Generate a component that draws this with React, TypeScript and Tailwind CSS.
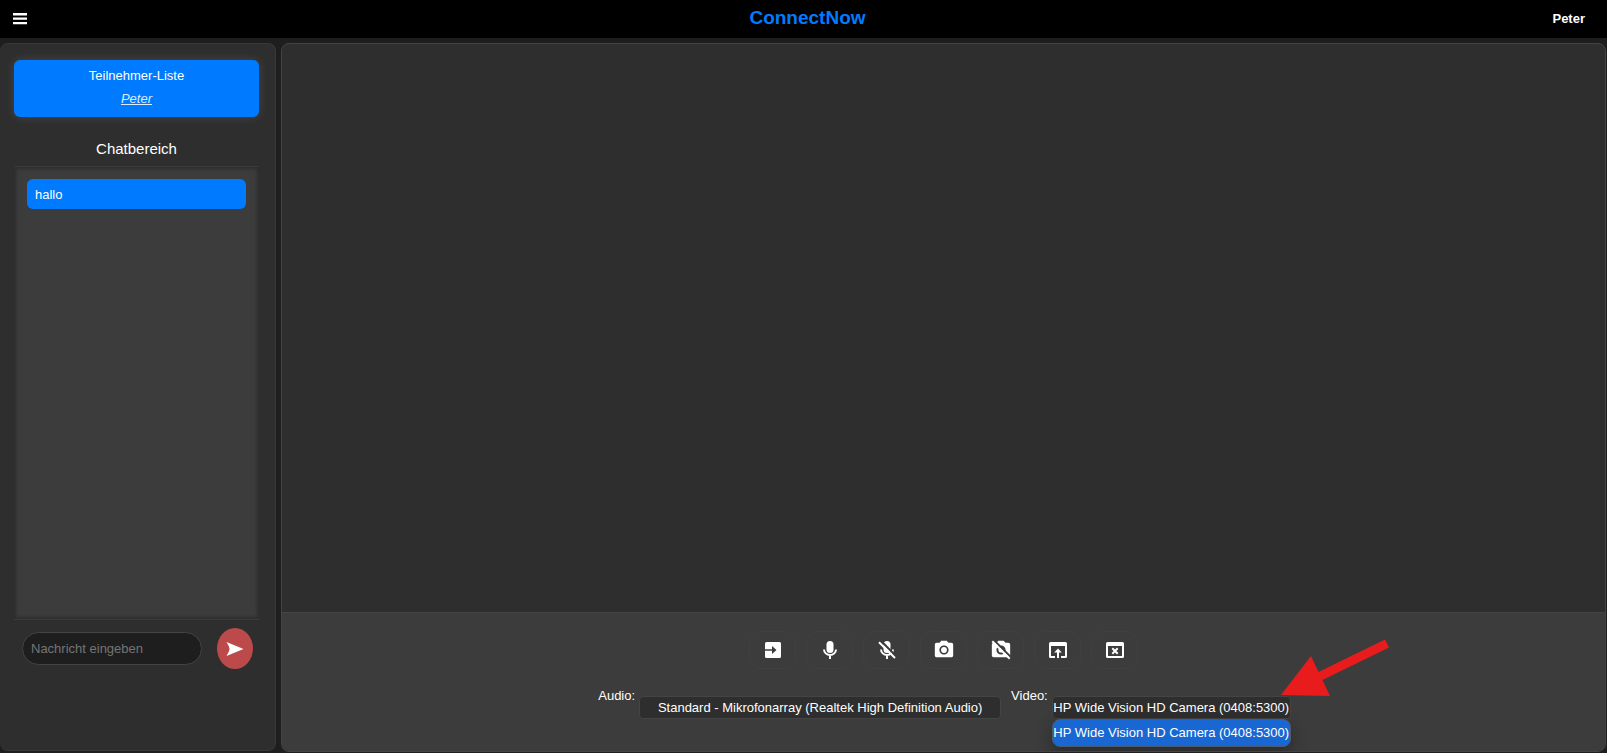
import type { ReactNode } from 'react';
import { MdPhotoCamera } from 'react-icons/md';

const audioDevices = ['Standard - Mikrofonarray (Realtek High Definition Audio)'];
const videoDevices = ['HP Wide Vision HD Camera (0408:5300)'];

function MenuIcon() {
  return (
    <svg viewBox="0 0 14 12" className="h-3 w-[14px]" fill="currentColor" aria-hidden="true">
      <path d="M0 0h14v2.400H0zM0 4.400h14v2.400H0zM0 8.900h14v2.400H0z" />
    </svg>
  );
}

function JoinIcon() {
  return (
    <svg viewBox="0 0 18 18" className="size-[18px]" fill="currentColor" aria-hidden="true">
      <path
        fillRule="evenodd"
        d="M2.500 1h13A1.500 1.500 0 0 1 17 2.500v13a1.500 1.500 0 0 1-1.500 1.500h-13A1.500 1.500 0 0 1 1 15.500V9.800h7v3.200L12.500 9 8 5v3.200H1V2.500A1.500 1.500 0 0 1 2.500 1z"
      />
    </svg>
  );
}

function MicIcon({ off = false }: { off?: boolean }) {
  return (
    <svg viewBox="0 0 18 18" className="size-[18px]" fill="none" aria-hidden="true">
      <rect x="5.500" y="0" width="7" height="12" rx="3.500" fill="currentColor" />
      <path d="M3 8.500a6 5.500 0 0 0 12 0M9 14v4" stroke="currentColor" strokeWidth="1.900" />
      {off && (
        <>
          <path d="M3 0 19 16" stroke="#3c3c3c" strokeWidth="2.200" />
          <path d="M1 1.200 17 17" stroke="currentColor" strokeWidth="1.900" />
        </>
      )}
    </svg>
  );
}

function CameraOffIcon() {
  return (
    <svg viewBox="0 0 24 24" className="size-[22px]" aria-hidden="true">
      <path
        fill="currentColor"
        fillRule="evenodd"
        d="M9 2 7.170 4H4a2 2 0 0 0-2 2v12a2 2 0 0 0 2 2h16a2 2 0 0 0 2-2V6a2 2 0 0 0-2-2h-3.170L15 2zm3 5a5 5 0 1 1 0 10 5 5 0 0 1 0-10zm0 2.200a2.800 2.800 0 1 0 0 5.600 2.800 2.800 0 0 0 0-5.600z"
      />
      <path d="M4.500 1.500 24 21" stroke="#3c3c3c" strokeWidth="2.200" />
      <path d="M2.500 2.500 21.500 21.500" stroke="currentColor" strokeWidth="2.200" />
    </svg>
  );
}

function ShareWindowIcon() {
  return (
    <svg viewBox="0 0 18 18" className="size-[18px]" fill="currentColor" aria-hidden="true">
      <path d="M1.500 1h15A1.500 1.500 0 0 1 18 2.500v13a1.500 1.500 0 0 1-1.500 1.500H12v-2h4V5H2v10h4v2H1.500A1.500 1.500 0 0 1 0 15.500v-13A1.500 1.500 0 0 1 1.500 1z" />
      <path d="M9 7.500 12.800 11.500H10V17H8v-5.500H5.200z" />
    </svg>
  );
}

function CloseWindowIcon() {
  return (
    <svg viewBox="0 0 18 18" className="size-[18px]" fill="currentColor" aria-hidden="true">
      <path
        fillRule="evenodd"
        d="M1.500 1h15A1.500 1.500 0 0 1 18 2.500v13a1.500 1.500 0 0 1-1.500 1.500h-15A1.500 1.500 0 0 1 0 15.500v-13A1.500 1.500 0 0 1 1.500 1zM2 5v10h14V5z"
      />
      <path d="m6.300 7.300 5.400 5.400m0-5.400-5.400 5.400" stroke="currentColor" strokeWidth="2" />
    </svg>
  );
}

function SendIcon() {
  return (
    <svg viewBox="0 0 18 16" className="h-4 w-[18px]" fill="currentColor" aria-hidden="true">
      <path d="M.5 1 17.500 8 .5 15Q3.200 11 3.600 8 3.200 5 .5 1z" />
    </svg>
  );
}

function ControlButton({ label, children }: { label: string; children: ReactNode }) {
  return (
    <button
      type="button"
      aria-label={label}
      className="flex h-[38px] w-[47px] items-center justify-center rounded-xl border border-[#404040] text-white"
    >
      {children}
    </button>
  );
}

function DeviceSelect({ id, devices, className }: { id: string; devices: string[]; className: string }) {
  return (
    <select
      id={id}
      className={`h-[23px] appearance-none rounded border border-[#444] bg-[#2e2e2e] text-center text-[13px] text-white ${className}`}
    >
      {devices.map((device) => (
        <option key={device}>{device}</option>
      ))}
    </select>
  );
}

export default function App() {
  return (
    <div className="flex h-screen flex-col overflow-hidden bg-[#1e1e1e] font-['Liberation_Sans',Arial,sans-serif] text-[13px] text-white">
      <header className="grid h-[38px] shrink-0 grid-cols-3 items-center bg-black px-3">
        <button type="button" aria-label="Menü" className="w-fit px-px">
          <MenuIcon />
        </button>
        <h1 className="pb-[2px] pl-2 text-center text-[19px] leading-5 font-bold text-[#007bff]">ConnectNow</h1>
        <span className="pr-[10px] text-right font-bold">Peter</span>
      </header>

      <div className="flex min-h-0 flex-1 gap-[5px] pt-[5px]">
        <aside className="mb-[2px] flex w-[276px] shrink-0 flex-col rounded-lg border border-l-0 border-[#383838] bg-[#2e2e2e] px-4 pt-4 pl-[14px]">
          <section className="flex h-[57px] shrink-0 flex-col items-center gap-[3px] rounded-md bg-[#007bff] pt-[6px] leading-5 shadow-[0_0_10px_rgba(255,255,255,0.12)]">
            <h2>Teilnehmer-Liste</h2>
            <a href="#peter" className="text-[#dcebff] italic underline">
              Peter
            </a>
          </section>
          <h2 className="mt-5 border-b border-[#3a3a3a] pt-[3px] pb-2 text-center text-[15px] leading-[18px]">
            Chatbereich
          </h2>
          <div className="flex-1 border-b border-[#3c3c3c] bg-[#3c3c3c] px-[13px] py-3 shadow-[inset_0_0_3px_2px_#2e2e2e]">
            <p className="rounded-md bg-[#007bff] px-2 pt-[6px] pb-1 leading-5">hallo</p>
          </div>
          <form className="mb-[81px] flex items-center gap-[15px] pt-2 pr-[6px] pl-2">
            <input
              type="text"
              aria-label="Nachricht eingeben"
              placeholder="Nachricht eingeben"
              className="h-[33px] min-w-0 flex-1 rounded-full border border-[#444] bg-[#1e1e1e] px-2 text-[13px] placeholder:text-[#757575]"
            />
            <button
              type="button"
              aria-label="Senden"
              className="flex h-[41px] w-9 items-center justify-center rounded-[50%] bg-[#bd4a4a]"
            >
              <SendIcon />
            </button>
          </form>
        </aside>

        <main className="mr-px mb-px flex min-w-0 flex-1 flex-col overflow-hidden rounded-lg border border-[#444] bg-[#2e2e2e]">
          <div className="flex-1" />
          <footer className="flex h-[139px] shrink-0 flex-col items-center border-t border-[#444] bg-[#3c3c3c] pt-[18px]">
            <div className="flex gap-[10px]">
              <ControlButton label="Beitreten">
                <JoinIcon />
              </ControlButton>
              <ControlButton label="Mikrofon an">
                <MicIcon />
              </ControlButton>
              <ControlButton label="Mikrofon aus">
                <MicIcon off />
              </ControlButton>
              <ControlButton label="Kamera an">
                <MdPhotoCamera className="size-[22px]" />
              </ControlButton>
              <ControlButton label="Kamera aus">
                <CameraOffIcon />
              </ControlButton>
              <ControlButton label="Bildschirm teilen">
                <ShareWindowIcon />
              </ControlButton>
              <ControlButton label="Teilen beenden">
                <CloseWindowIcon />
              </ControlButton>
            </div>
            <div className="mt-[17px] flex items-start gap-[10px] pl-[2px] leading-5">
              <div className="flex gap-1">
                <label htmlFor="audio">Audio:</label>
                <div className="pt-[10px]">
                  <DeviceSelect id="audio" devices={audioDevices} className="w-[362px]" />
                </div>
              </div>
              <div className="flex gap-1">
                <label htmlFor="video">Video:</label>
                <div className="relative pt-[10px]">
                  <DeviceSelect id="video" devices={videoDevices} className="w-[239px]" />
                  <ul className="absolute top-full left-0 w-full rounded-lg border border-[#4a5a70] bg-[#1967d2] py-px leading-6 whitespace-nowrap shadow-[0_6px_16px_rgba(0,0,0,0.3)]">
                    <li className="flex justify-center">{videoDevices[0]}</li>
                  </ul>
                  <svg
                    viewBox="0 0 108 58"
                    className="pointer-events-none absolute -top-12 left-[229px] h-[58px] w-[108px]"
                    fill="#e81c1c"
                    aria-hidden="true"
                  >
                    <path d="M0 57 30 18 37.500 34 104 1.500 108 9.500 41.500 42 49 58z" />
                  </svg>
                </div>
              </div>
            </div>
          </footer>
        </main>
      </div>
    </div>
  );
}
